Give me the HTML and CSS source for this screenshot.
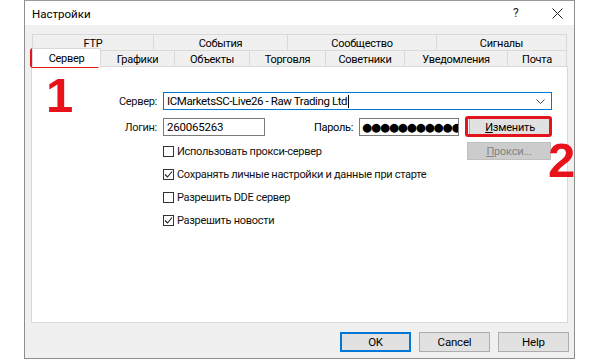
FILE: index.html
```html
<!DOCTYPE html>
<html lang="ru">
<head>
<meta charset="utf-8">
<title>Настройки</title>
<link rel="stylesheet" href="styles.css">
</head>
<body>
<div class="dialog">
  <div class="titlebar">
    <span class="title">Настройки</span>
    <span class="tb-help">?</span>
    <span class="tb-close">
      <svg width="11" height="11" viewBox="0 0 11 11"><path d="M0.5 0.5 L10.5 10.5 M10.5 0.5 L0.5 10.5" stroke="#222" stroke-width="1"/></svg>
    </span>
  </div>

  <div class="tabs">
    <div class="tabrow back">
      <div class="tab w-ftp">FTP</div>
      <div class="tab w-events">События</div>
      <div class="tab w-comm">Сообщество</div>
      <div class="tab w-sig">Сигналы</div>
    </div>
    <div class="tabrow front">
      <div class="tab active w-srv">Сервер</div>
      <div class="tab w-chart">Графики</div>
      <div class="tab w-obj">Объекты</div>
      <div class="tab w-trade">Торговля</div>
      <div class="tab w-adv">Советники</div>
      <div class="tab w-notif">Уведомления</div>
      <div class="tab w-mail">Почта</div>
    </div>
  </div>

  <div class="panel">
    <div class="row r-server">
      <label class="lbl">Сервер:</label>
      <div class="combo">
        <span class="combo-text">ICMarketsSC-Live26 - Raw Trading Ltd</span><span class="caret"></span>
        <svg class="chev" width="9" height="5" viewBox="0 0 9 5"><path d="M0.5 0.5 L4.5 4.5 L8.5 0.5" fill="none" stroke="#444" stroke-width="1"/></svg>
      </div>
    </div>
    <div class="row r-login">
      <label class="lbl">Логин:</label>
      <div class="field login">260065263</div>
      <label class="lbl-pass">Пароль:</label>
      <div class="field pass"><span class="dots">●●●●●●●●●●●</span></div>
      <button class="btn change"><span class="u">И</span>зменить</button>
    </div>
    <div class="row r-proxy">
      <div class="check"><span class="box"></span><span>Использовать прокси-сервер</span></div>
      <button class="btn proxy" disabled><span class="u">П</span>рокси...</button>
    </div>
    <div class="check row-c"><span class="box on"><svg width="9" height="9" viewBox="0 0 9 9"><path d="M1 4.5 L3.5 7 L8 1.5" fill="none" stroke="#222" stroke-width="1.1"/></svg></span><span>Сохранять личные настройки и данные при старте</span></div>
    <div class="check row-c"><span class="box"></span><span>Разрешить DDE сервер</span></div>
    <div class="check row-c"><span class="box on"><svg width="9" height="9" viewBox="0 0 9 9"><path d="M1 4.5 L3.5 7 L8 1.5" fill="none" stroke="#222" stroke-width="1.1"/></svg></span><span>Разрешить новости</span></div>
  </div>

  <div class="footer">
    <button class="btn foot default">OK</button>
    <button class="btn foot">Cancel</button>
    <button class="btn foot">Help</button>
  </div>

  <div class="mark mark-tab"></div>
  <div class="mark mark-btn"></div>
  <div class="num num1">1</div>
  <div class="num num2">2</div>
</div>
</body>
</html>
```

FILE: styles.css
```css
html, body {
  margin: 0;
  padding: 0;
  background: #ffffff;
}
body {
  width: 600px;
  height: 360px;
  overflow: hidden;
  font-family: Roboto, "Noto Sans", sans-serif;
  font-size: 11px;
  letter-spacing: -0.3px;
  color: #000;
}
.dialog {
  position: relative;
  margin-left: 24px;
  width: 549px;
  height: 357px;
  border: 1px solid #8e8e8e;
  border-top-color: #9a9a9a;
  background: #f0f0f0;
  box-sizing: content-box;
}
.titlebar {
  height: 24px;
  background: #fff;
  display: flex;
  align-items: center;
  padding-left: 7px;
}
.title {
  font-size: 11.5px;
  letter-spacing: 0;
  flex: 1;
  padding-top: 1px;
}
.tb-help {
  font-size: 12px;
  width: 12px;
  margin-right: 27px;
  color: #222;
}
.tb-close {
  width: 11px;
  height: 11px;
  margin-right: 11px;
  display: flex;
}
.tabs {
  margin: 9px 0 0 7px;
}
.tabrow {
  display: flex;
  height: 16px;
}
.tab {
  box-sizing: border-box;
  height: 16px;
  border: 1px solid #d9d9d9;
  border-bottom: none;
  margin-right: -1px;
  display: flex;
  align-items: center;
  justify-content: center;
  line-height: 1;
  background: #f0f0f0;
  padding-top: 1px;
}
.tab.active {
  background: #fff;
  margin-top: -2px;
  position: relative;
  z-index: 1;
  margin-bottom: -1px;
  height: 19px;
}
.w-ftp { width: 122px; }
.w-events { width: 135px; }
.w-comm { width: 150px; }
.w-sig { width: 131px; }
.w-srv { width: 69px; }
.w-chart { width: 75px; }
.w-obj { width: 76px; }
.w-trade { width: 77px; }
.w-adv { width: 80px; }
.w-notif { width: 104px; }
.w-mail { width: 60px; }

.panel {
  box-sizing: border-box;
  margin-left: 6px;
  width: 537px;
  height: 257px;
  background: #fff;
  border: 1px solid #d9d9d9;
  padding-top: 25px;
}
.row {
  display: flex;
  align-items: center;
}
.lbl {
  width: 125px;
  text-align: right;
  margin-right: 6px;
  color: #111;
}
.combo {
  box-sizing: border-box;
  width: 389px;
  height: 18px;
  border: 1px solid #0078d7;
  display: flex;
  align-items: center;
  padding-left: 3px;
  position: relative;
}
.combo-text {
  font-size: 11.5px;
  letter-spacing: -0.4px;
}
.caret {
  width: 1px;
  height: 13px;
  background: #000;
  margin-left: 1px;
}
.chev {
  position: absolute;
  right: 6px;
  top: 6px;
}
.r-login {
  margin-top: 8px;
}
.field {
  box-sizing: border-box;
  height: 18px;
  border: 1px solid #7a7a7a;
  display: flex;
  align-items: center;
  padding-left: 3px;
  overflow: hidden;
  white-space: nowrap;
}
.login {
  width: 102px;
  font-size: 11.5px;
  letter-spacing: -0.2px;
}
.lbl-pass {
  margin-left: 49px;
  margin-right: 6px;
}
.pass {
  width: 100px;
  padding-left: 2px;
}
.dots {
  font-family: "DejaVu Sans", sans-serif;
  font-size: 11.5px;
  letter-spacing: -1.1px;
}
.btn {
  box-sizing: border-box;
  font-family: Roboto, "Noto Sans", sans-serif;
  font-size: 11px;
  letter-spacing: -0.2px;
  color: #000;
  background: #e1e1e1;
  border: 1px solid #adadad;
  height: 18px;
  padding: 0;
  display: flex;
  align-items: center;
  justify-content: center;
}
.u { text-decoration: underline; }
.change {
  width: 82px;
  margin-left: 10px;
}
.r-proxy {
  margin-top: 6px;
  justify-content: space-between;
}
.proxy {
  width: 84px;
  margin-right: 16px;
  background: #cccccc;
  border-color: #bfbfbf;
  color: #838383;
}
.check {
  display: flex;
  align-items: center;
  margin-left: 131px;
  color: #111;
}
.box {
  box-sizing: border-box;
  width: 11px;
  height: 11px;
  border: 1px solid #333;
  margin-right: 3px;
  display: flex;
  align-items: center;
  justify-content: center;
  background: #fff;
}
.row-c {
  height: 23px;
}
.r-proxy + .row-c {
  margin-top: 3px;
}
.footer {
  display: flex;
  justify-content: flex-end;
  gap: 8px;
  margin-top: 9px;
  padding-right: 5px;
}
.foot {
  width: 71px;
  height: 20px;
  font-size: 11.5px;
}
.default {
  border: 1px solid #0078d7;
  box-shadow: inset 0 0 0 1px #0078d7;
}
.mark {
  position: absolute;
  border: 3px solid #e3141b;
  border-radius: 3px;
  box-sizing: border-box;
}
.mark-tab {
  left: 5px;
  top: 47px;
  width: 70px;
  height: 20px;
}
.mark-btn {
  left: 440px;
  top: 115px;
  width: 87px;
  height: 21px;
}
.num {
  position: absolute;
  font-family: "Liberation Sans", Arial, sans-serif;
  font-weight: bold;
  font-size: 49px;
  letter-spacing: 0;
  line-height: 1;
  color: #e8121a;
}
.num1 {
  left: 21px;
  top: 70px;
}
.num2 {
  left: 523px;
  top: 135px;
}
```
